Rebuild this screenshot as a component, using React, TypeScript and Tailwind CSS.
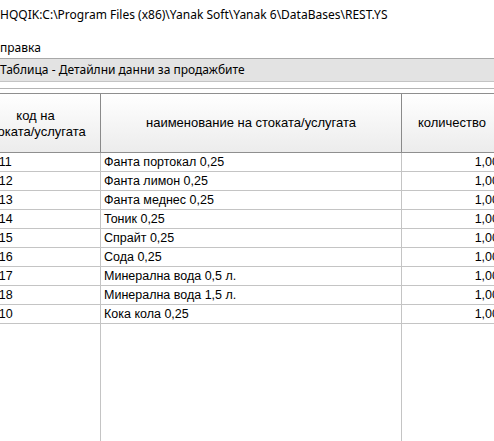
import React from "react";

const rows = [
  { code: "100011", name: "Фанта портокал 0,25", qty: "1,00" },
  { code: "100012", name: "Фанта лимон 0,25", qty: "1,00" },
  { code: "100013", name: "Фанта меднес 0,25", qty: "1,00" },
  { code: "100014", name: "Тоник 0,25", qty: "1,00" },
  { code: "100015", name: "Спрайт 0,25", qty: "1,00" },
  { code: "100016", name: "Сода 0,25", qty: "1,00" },
  { code: "100017", name: "Минерална вода 0,5 л.", qty: "1,00" },
  { code: "100018", name: "Минерална вода 1,5 л.", qty: "1,00" },
  { code: "100010", name: "Кока кола 0,25", qty: "1,00" },
];

const cols = "grid grid-cols-[130px_301px_101px_1fr]";

export default function App() {
  return (
    <div className="w-[494px] h-[441px] overflow-hidden bg-white flex flex-col text-black font-['Noto_Sans',sans-serif]">
      {/* Window title */}
      <div className="h-[30px] shrink-0 flex items-center text-[12px] whitespace-nowrap">
        HQQIK:C:\Program Files (x86)\Yanak Soft\Yanak 6\DataBases\REST.YS
      </div>

      {/* Menu */}
      <div className="h-[28px] shrink-0 flex items-center pt-[8px] text-[12px]">
        правка
      </div>

      {/* Panel caption */}
      <div className="h-[24px] shrink-0 flex items-center bg-[#e3e3e3] border-t border-[#a8a8a8] border-b border-b-[#c4c4c4] text-[12px] whitespace-nowrap">
        Таблица - Детайлни данни за продажбите
      </div>

      <div className="h-[6px] shrink-0" />
      <div className="h-[5px] shrink-0 border-t border-[#b4b4b4]" />

      {/* Grid */}
      <div className="flex-1 flex flex-col ml-[-29px] w-[620px] font-['Liberation_Sans',Arial,sans-serif]">
        <div
          className={`${cols} h-[60px] shrink-0 border-y border-[#8f8f8f] bg-gradient-to-b from-white to-[#ececec] text-[13px]`}
        >
          <div className="border-r border-[#8a8a8a] flex flex-col items-center justify-center leading-[16px] pt-[1px]">
            <span>код на</span>
            <span>стоката/услугата</span>
          </div>
          <div className="border-r border-[#8a8a8a] flex items-center justify-center">
            наименование на стоката/услугата
          </div>
          <div className="border-r border-[#8a8a8a] flex items-center justify-center">
            количество
          </div>
          <div />
        </div>

        {rows.map((r) => (
          <div
            key={r.code}
            className={`${cols} h-[19px] shrink-0 border-b border-[#c4c4c4] text-[12.5px] leading-[18px]`}
          >
            <div className="border-r border-[#c4c4c4] whitespace-nowrap">
              {r.code}
            </div>
            <div className="border-r border-[#c4c4c4] pl-[3px] whitespace-nowrap">
              {r.name}
            </div>
            <div className="border-r border-[#c4c4c4] pr-[3px] text-right">
              {r.qty}
            </div>
            <div />
          </div>
        ))}

        <div className={`${cols} flex-1`}>
          <div className="border-r border-[#c4c4c4]" />
          <div className="border-r border-[#c4c4c4]" />
          <div className="border-r border-[#c4c4c4]" />
          <div />
        </div>
      </div>
    </div>
  );
}
